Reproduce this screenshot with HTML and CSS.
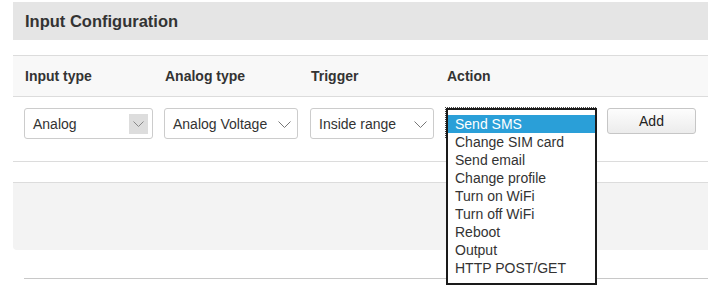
FILE: index.html
```html
<!DOCTYPE html>
<html>
<head>
<meta charset="utf-8">
<link rel="stylesheet" href="styles.css">
</head>
<body>
<div class="panel">
  <div class="panel-title"><h3>Input Configuration</h3></div>
  <div class="cfg">
    <div class="cfg-head">
      <div class="th">Input type</div>
      <div class="th">Analog type</div>
      <div class="th">Trigger</div>
      <div class="th">Action</div>
      <div class="th"></div>
    </div>
    <div class="cfg-row">
      <div class="sel sel-input">
        <span>Analog</span>
        <span class="arrow-box"><svg width="11" height="6" viewBox="0 0 11 6"><path d="M0.5 0.5 L5.5 5.5 L10.5 0.5" fill="none" stroke="#888" stroke-width="1"/></svg></span>
      </div>
      <div class="sel sel-analog">
        <span>Analog Voltage</span>
        <svg class="chev" width="13" height="7" viewBox="0 0 13 7"><path d="M0.5 0.5 L6.5 6.5 L12.5 0.5" fill="none" stroke="#777" stroke-width="1"/></svg>
      </div>
      <div class="sel sel-trigger">
        <span>Inside range</span>
        <svg class="chev" width="13" height="7" viewBox="0 0 13 7"><path d="M0.5 0.5 L6.5 6.5 L12.5 0.5" fill="none" stroke="#777" stroke-width="1"/></svg>
      </div>
      <div class="action-cell">
        <div class="sel sel-action"></div>
        <ul class="dropdown">
          <li class="active">Send SMS</li>
          <li>Change SIM card</li>
          <li>Send email</li>
          <li>Change profile</li>
          <li>Turn on WiFi</li>
          <li>Turn off WiFi</li>
          <li>Reboot</li>
          <li>Output</li>
          <li>HTTP POST/GET</li>
        </ul>
      </div>
      <div class="btn-cell"><button class="btn">Add</button></div>
    </div>
  </div>
  <div class="empty-box"></div>
  <div class="rule"></div>
</div>
</body>
</html>
```

FILE: styles.css
```css
* { box-sizing: border-box; }
html, body {
  height: 100%;
}
body {
  margin: 0;
  min-height: 293px;
  font-family: "Liberation Sans", Arial, sans-serif;
  color: #333;
  background: #fff;
}
.panel {
  margin: 2px 0 0 13px;
  padding-bottom: 14px;
}
.panel-title {
  background: #e5e5e5;
  height: 38px;
  padding-left: 12px;
  display: flex;
  align-items: center;
}
.panel-title h3 {
  margin: 0;
  font-size: 16.5px;
  font-weight: bold;
  color: #333;
}
.cfg {
  margin-top: 15px;
}
.cfg-head,
.cfg-row {
  display: grid;
  grid-template-columns: 140px 146px 136px 161px 1fr;
  padding-left: 11px;
}
.cfg-head {
  height: 42px;
  align-items: center;
  background: #f8f8f8;
  border-top: 1px solid #dcdcdc;
  border-bottom: 1px solid #dcdcdc;
}
.th {
  font-size: 14px;
  font-weight: bold;
  padding-left: 1px;
}
.cfg-row {
  height: 65px;
  padding-top: 11px;
  border-bottom: 1px solid #dcdcdc;
  align-items: start;
}
.sel {
  height: 31px;
  border: 1px solid #ccc;
  border-radius: 3px;
  background: #fff;
  font-size: 14px;
  display: flex;
  align-items: center;
  justify-content: space-between;
  padding-left: 8px;
}
.sel-input { width: 129px; padding-right: 4px; }
.sel-analog { width: 134px; padding-right: 6px; }
.sel-trigger { width: 124px; padding-right: 6px; }
.arrow-box {
  width: 19px;
  height: 20px;
  margin-top: 1px;
  background: #ddd;
  display: flex;
  align-items: center;
  justify-content: center;
}
.chev { margin-top: 1px; }
.action-cell {
  position: relative;
  width: 151px;
}
.sel-action {
  width: 151px;
  position: relative;
}
.sel-action::before {
  content: "";
  position: absolute;
  top: -2px;
  left: -2px;
  right: 0;
  bottom: 0;
  border-top: 1px dotted #444;
  border-left: 1px dotted #444;
}
.dropdown {
  position: absolute;
  top: 0;
  left: 0;
  width: 151px;
  margin: 0;
  padding: 5px 0 6px;
  list-style: none;
  border: 2px solid #1a1a1a;
  background: #fff;
  z-index: 5;
}
.dropdown li {
  height: 18px;
  line-height: 18px;
  font-size: 14px;
  padding-left: 7px;
  color: #333;
  white-space: nowrap;
}
.dropdown li.active {
  background: #2a9fd8;
  color: #fff;
}
.btn {
  width: 89px;
  height: 26px;
  border: 1px solid #c6c6c6;
  border-radius: 3px;
  background: linear-gradient(#fdfdfd, #ececec);
  font-family: "Liberation Sans", Arial, sans-serif;
  font-size: 14px;
  color: #222;
  padding: 0;
}
.empty-box {
  margin-top: 20px;
  height: 68px;
  background: #f3f3f3;
  border-top: 1px solid #dcdcdc;
  border-bottom-left-radius: 4px;
}
.rule {
  margin: 28px 0 0 11px;
  border-top: 1px solid #c8c8c8;
}
```
